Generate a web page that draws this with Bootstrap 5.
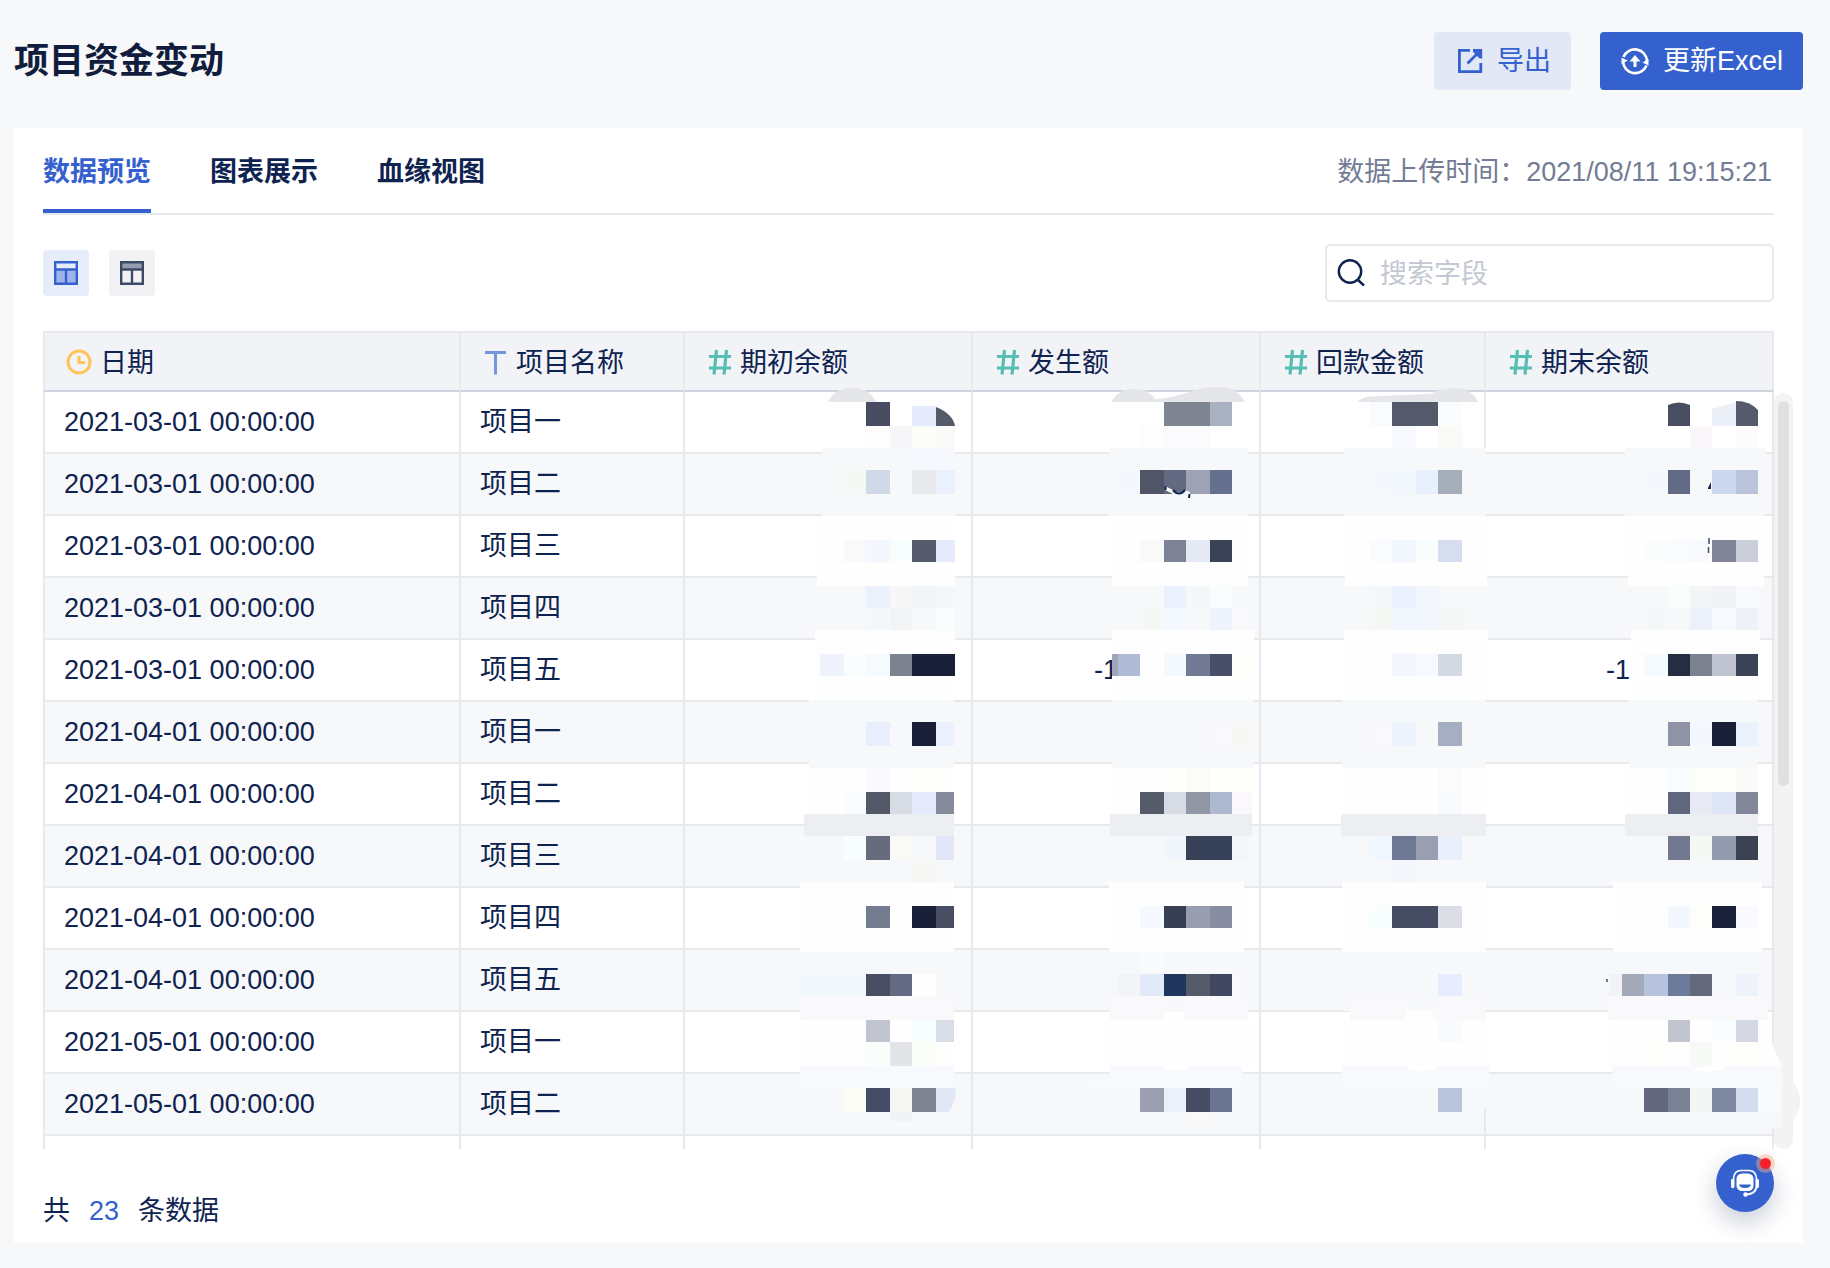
<!DOCTYPE html>
<html lang="zh-CN">
<head>
<meta charset="utf-8">
<meta name="viewport" content="width=device-width, initial-scale=1">
<title>项目资金变动</title>
<link href="https://cdn.jsdelivr.net/npm/bootstrap@5.3.0/dist/css/bootstrap.min.css" rel="stylesheet">
<style>
  :root { --navy: #0f2350; --brand: #3561ce; --line: #e8e9ed; --stripe: #f6f8fa; }
  body { background: var(--stripe); color: var(--navy); font-family: "Liberation Sans", "Noto Sans CJK SC", sans-serif; font-size: 27px; line-height: 38px; }
  .page { padding: 32px 27px 24px 14px; }
  .page-title { font-size: 35px; line-height: 58px; font-weight: 700; color: #121c3d; }
  .head-actions { gap: 29px; }
  .act { height: 58px; padding: 0 19px; gap: 14px; border-radius: 4px; border: 1px solid transparent; font-size: 27px; line-height: 38px; }
  .act-export { background: #e3e8f6; color: var(--brand); }
  .act-update { background: var(--brand); color: #fff; }
  .panel { margin-top: 38px; padding: 0 29px 13px; background: #fff; }
  .tabs-line { border-bottom: 2px solid var(--line); }
  .tabs { gap: 59px; }
  .tabs .nav-link { padding: 25px 0 18px; border-bottom: 4px solid transparent; color: var(--navy); font-weight: 700; }
  .tabs .nav-link.active { color: var(--brand); border-color: var(--brand); }
  .upload-time { padding: 25px 2px 0 0; color: #737c94; }
  .tools { padding: 29px 0; }
  .view-btn { width: 46px; height: 46px; padding: 0; border: 0; border-radius: 4px; background: #f2f2f4; }
  .view-btn.on { background: #e6ecfa; }
  .views { gap: 20px; }
  .search-box { width: 449px; height: 58px; padding: 0 10px; gap: 14px; border: 2px solid var(--line); border-radius: 5px; }
  .search-box input { height: 40px; padding: 2px 0 0; font-size: 27px; line-height: 38px; color: var(--navy); min-width: 0; }
  .search-box input::placeholder { color: #c3c8d3; opacity: 1; }
  .grid-table { width: 100%; table-layout: fixed; border-collapse: separate; border-spacing: 0; }
  .grid-table th { height: 61px; padding: 2px 20px 0; font-weight: 400; background: #f2f3f7; border-top: 2px solid var(--line); border-bottom: 2px solid #cfd4df; border-right: 2px solid var(--line); }
  .grid-table td { height: 62px; padding: 0 19px; border-bottom: 2px solid var(--line); border-right: 2px solid var(--line); }
  .grid-table th:first-child, .grid-table td:first-child { border-left: 2px solid var(--line); }
  .grid-table tbody tr:nth-child(even) td { background: var(--stripe); }
  .grid-table tbody tr.more td { height: 13px; border-bottom: 0; background: #fff; }
  .field { gap: 7px; }
  .c-sm { width: 224px; }
  .c-md { width: 225px; }
  .c-lg { width: 288px; }
  .mask { z-index: 1; overflow: visible; pointer-events: none; }
  .track { top: 62px; bottom: 0; left: 100%; width: 19px; border-radius: 10px; background: #f3f3f4; }
  .thumb { width: 11px; height: 385px; margin: 8px auto 0; border-radius: 6px; background: #dfe0e2; }
  .total { padding-top: 43px; gap: 19px; }
  .total strong { font-weight: 400; color: var(--brand); }
  .help { right: 56px; bottom: 55px; width: 58px; height: 58px; z-index: 3; padding: 0; border: 0; border-radius: 50%; background: var(--brand); box-shadow: 0 10px 24px rgba(30,40,90,.24); }
  .help-dot { top: 4px; right: 3px; width: 11px; height: 11px; border-radius: 50%; background: #f5222d; box-shadow: 0 0 0 4px rgba(250,170,130,.45); }
</style>
<script src="https://cdn.jsdelivr.net/npm/bootstrap@5.3.0/dist/js/bootstrap.bundle.min.js"></script>
</head>
<body>
<div class="page position-relative">
  <header class="d-flex justify-content-between align-items-center">
    <h1 class="page-title m-0">项目资金变动</h1>
    <div class="head-actions d-flex">
      <button type="button" class="act act-export btn d-flex align-items-center">
        <svg width="29" height="29" viewBox="0 0 29 29" fill="none" stroke="currentColor" stroke-width="2.8" aria-hidden="true"><path d="M16 3.400H5.400V24.600H26.800V16M26.200 3.800 13.500 16.500"/><path d="M19 2H28.200V11.500L25.500 11.500L19 4.800Z" fill="currentColor" stroke="none"/></svg>
        <span>导出</span>
      </button>
      <button type="button" class="act act-update btn d-flex align-items-center">
        <svg width="29" height="29" viewBox="0 0 29 29" fill="none" stroke="currentColor" stroke-width="2.600" aria-hidden="true"><path d="M3.500 10A12.200 12.200 0 0 1 27 14.500M26.500 18.500A12.200 12.200 0 0 1 3 14.500"/><path d="M22.500 15.500 28.500 12V18.500ZM7.800 13.500 1.500 17V10.800Z" fill="currentColor" stroke="none"/><path d="M15 20V12" stroke-width="3"/><path d="M15 8 20.500 14.500H9.500Z" fill="currentColor" stroke="none"/></svg>
        <span>更新Excel</span>
      </button>
    </div>
  </header>

  <main class="panel">
    <div class="tabs-line d-flex justify-content-between align-items-start">
      <nav class="tabs nav">
        <a class="nav-link active" href="#preview" aria-current="page">数据预览</a>
        <a class="nav-link" href="#charts">图表展示</a>
        <a class="nav-link" href="#lineage">血缘视图</a>
      </nav>
      <div class="upload-time">数据上传时间：2021/08/11 19:15:21</div>
    </div>

    <div class="tools d-flex justify-content-between align-items-center">
      <div class="views d-flex">
        <button type="button" class="view-btn on d-flex align-items-center justify-content-center" aria-label="表格视图">
          <svg width="26" height="26" viewBox="0 0 26 26" fill="none" stroke="#3561ce" stroke-width="2.400"><path d="M2 9.500H24V24H2Z" fill="#9db3ea" stroke="none"/><path d="M2.200 2.200H23.800V23.800H2.200ZM2 9.500H24M13 9.500V24"/></svg>
        </button>
        <button type="button" class="view-btn d-flex align-items-center justify-content-center" aria-label="字段视图">
          <svg width="26" height="26" viewBox="0 0 26 26" fill="none" stroke="#3d4a67" stroke-width="2.400"><path d="M2 2H24V9.500H2Z" fill="#969dae" stroke="none"/><path d="M2.200 2.200H23.800V23.800H2.200ZM2 9.500H24M13 9.500V24"/></svg>
        </button>
      </div>
      <label class="search-box d-flex align-items-center">
        <svg class="flex-shrink-0" width="29" height="29" viewBox="0 0 29 29" fill="none" stroke="#0f2350" stroke-width="2.400" aria-hidden="true"><circle cx="13" cy="12.500" r="11.200"/><path d="M20.500 20.500 27 26.500"/></svg>
        <input class="border-0 flex-grow-1 bg-transparent" type="text" placeholder="搜索字段" aria-label="搜索字段">
      </label>
    </div>

    <div class="position-relative">
      <table class="grid-table">
        <colgroup><col><col class="c-sm"><col class="c-lg"><col class="c-lg"><col class="c-md"><col class="c-lg"></colgroup>
        <thead>
          <tr>
            <th scope="col"><div class="field d-flex align-items-center"><svg width="28" height="28" viewBox="0 0 28 28" fill="none" stroke="#fdc458" stroke-width="3"><circle cx="14" cy="13" r="11"/><path d="M14 7V13.500H20"/></svg>日期</div></th>
            <th scope="col"><div class="field d-flex align-items-center"><svg width="28" height="28" viewBox="0 0 28 28" fill="none" stroke="#7694e0" stroke-width="3"><path d="M4 3.500H25M14.500 3.500V25.500"/></svg>项目名称</div></th>
            <th scope="col"><div class="field d-flex align-items-center"><svg width="28" height="28" viewBox="0 0 28 28" fill="none" stroke="#55bdb2" stroke-width="3.200"><path d="M4 7.500H26M4 19H26M11.500 1 9 25.500M21.500 1 19 25.500"/></svg>期初余额</div></th>
            <th scope="col"><div class="field d-flex align-items-center"><svg width="28" height="28" viewBox="0 0 28 28" fill="none" stroke="#55bdb2" stroke-width="3.200"><path d="M4 7.500H26M4 19H26M11.500 1 9 25.500M21.500 1 19 25.500"/></svg>发生额</div></th>
            <th scope="col"><div class="field d-flex align-items-center"><svg width="28" height="28" viewBox="0 0 28 28" fill="none" stroke="#55bdb2" stroke-width="3.200"><path d="M4 7.500H26M4 19H26M11.500 1 9 25.500M21.500 1 19 25.500"/></svg>回款金额</div></th>
            <th scope="col"><div class="field d-flex align-items-center"><svg width="28" height="28" viewBox="0 0 28 28" fill="none" stroke="#55bdb2" stroke-width="3.200"><path d="M4 7.500H26M4 19H26M11.500 1 9 25.500M21.500 1 19 25.500"/></svg>期末余额</div></th>
          </tr>
        </thead>
        <tbody id="rows"></tbody>
      </table>
      <div class="track position-absolute"><div class="thumb"></div></div>
    </div>

    <div class="total d-flex"><span>共</span><strong>23</strong><span>条数据</span></div>
  </main>

  <button type="button" class="help position-absolute d-flex align-items-center justify-content-center" aria-label="在线客服">
    <svg width="30" height="30" viewBox="0 0 30 30" fill="none" stroke="#fff" stroke-width="1.600"><path d="M3.500 13V11Q4 2.500 11 2.500H19Q26 2.500 26.500 11V13"/><path d="M26.500 19Q25 26 17 26.500" stroke-width="2"/><path d="M2.800 12.500V18.500M27.200 12.500V18.500" stroke-width="3.500" stroke-linecap="round"/><circle cx="15.500" cy="26.500" r="2.200" fill="#fff" stroke="none"/><rect x="6.500" y="5.500" width="17" height="17.500" rx="5.500" fill="#fff" stroke="none"/><path d="M9 16.500H21Q20 20 15 20T9 16.500Z" fill="#3561ce" stroke="none"/></svg>
    <span class="help-dot position-absolute"></span>
  </button>
</div>

<script>
  // Masked amounts: each column lists bands [top, bottom, [left, right, colour], ...]
  const W = '#fefefe', S = '#f6f8fa', G = '#edeef1', L = '#f9f9fc', B = '#f7f9fd';
  const masks = [
    { box: '685 392 286 757', width: 286,
      under: '<path d="M828 402C836 383 868 383 876 402Z" fill="#e5e6e9"/>',
      bands: [
        [402,426,[866,890,'#484d62']],[406,426,[912,936,'#e5ebfa']],
        [426,448,[866,890,'#fdfefb'],[890,912,'#f6f6f8'],[912,936,'#fcfdf8'],[936,955,'#fafbf9']],
        [448,516,[822,955,S]],[448,470,[866,890,'#f5f9f9'],[912,955,'#f7f8fd']],
        [470,494,[844,866,'#f6f8f6'],[866,890,'#d0d9e8'],[912,936,'#e8e9ec'],[936,955,'#eaf1fd']],
        [516,586,[817,955,W]],
        [540,562,[844,866,'#f9f9f9'],[866,890,'#f4f8fe'],[890,912,'#f8fdfe'],[912,936,'#555b6b'],[936,955,'#e5ebfb']],
        [586,630,[816,955,S]],[586,608,[866,890,'#ebf1fc'],[890,912,'#f7f7f8'],[912,936,'#f1f5f8'],[936,955,'#f4f8fd']],
        [608,630,[866,890,'#f2f8fb'],[890,912,'#f3f4f6'],[936,955,'#f8fdfe']],
        [630,700,[815,955,W]],
        [654,676,[820,844,'#eef3fe'],[844,866,'#f9fdfe'],[866,890,'#f5faff'],[890,912,'#7c8290'],[912,955,'#1b2039']],
        [700,768,[809,954,S]],[700,722,[812,954,'#f5f9f9']],
        [722,746,[866,890,'#e8eefc'],[912,936,'#1b2039'],[936,954,'#eaf0fd']],
        [768,814,[808,954,W]],[768,792,[866,890,'#fbf9fe'],[912,936,'#fdfefa']],
        [792,814,[844,866,'#f9fdfe'],[866,890,'#535867'],[890,912,'#d8dce4'],[912,936,'#e5ebfb'],[936,954,'#868b9c']],
        [814,836,[804,954,G]],[836,882,[804,954,S]],
        [836,860,[844,866,'#f8fdfe'],[866,890,'#666b7e'],[890,912,'#f9f9f6'],[936,954,'#e1e7f6']],[860,882,[912,936,'#f7f8f5']],
        [882,952,[800,954,W]],[906,928,[866,890,'#747c90'],[912,936,'#1b2039'],[936,954,'#4a4e62']],
        [952,996,[800,954,S]],
        [974,996,[800,844,'#f3f8fc'],[844,866,'#f2f9fd'],[866,890,'#494e63'],[890,912,'#636a81'],[912,936,'#fefefe']],
        [996,1020,[800,954,L]],[1020,1066,[802,955,W]],
        [1020,1042,[866,890,'#c1c5d0'],[912,936,'#f8fdfe'],[936,954,'#d8dde6']],
        [1042,1066,[866,890,'#fafefb'],[890,912,'#e3e4e7'],[912,936,'#fbfdf9']],
        [1066,1088,[800,955,B]],[1088,1112,[844,866,'#fdfdf8'],[866,890,'#454c67'],[890,912,'#f6f7f5'],[912,936,'#7f8491']],
        [1112,1121,[890,912,'#f2f3f6']]
      ],
      over: '<path d="M936 407Q953 414 955 426H936Z" fill="#555b69"/><path d="M936 1088H956Q956 1104 948 1112H936Z" fill="#e1e7f7"/>' },
    { box: '973 392 286 757', width: 286,
      under: '<path d="M1111 402C1120 385 1145 385 1155 399C1185 397 1195 387 1215 387C1234 387 1240 393 1245 402Z" fill="#e5e6e9"/><text x="1094" y="679" font-size="27" fill="#0f2350">-1</text>',
      bands: [
        [402,426,[1164,1210,'#7f8491'],[1210,1232,'#aab2c1']],[426,448,[1140,1164,'#fefdfb'],[1164,1210,'#fbfbfd']],
        [448,516,[1109,1248,S]],[470,494,[1118,1140,'#f4f7fd'],[1140,1164,'#505567'],[1164,1186,'#636980'],[1186,1210,'#9da2b4'],[1210,1232,'#65708f']],
        [516,586,[1112,1248,W]],[540,562,[1140,1164,'#f8f9f8'],[1164,1186,'#7d8394'],[1186,1210,'#e5e9f4'],[1210,1232,'#3a4256']],
        [586,630,[1112,1248,S]],[586,608,[1164,1186,'#eaf1fc'],[1186,1210,'#f6f7f9'],[1210,1232,'#f9fdfe']],
        [608,630,[1140,1164,'#f6f8f5'],[1164,1186,'#f3f9ff'],[1210,1232,'#eff3fc'],[1232,1248,'#f9f8fa']],
        [630,700,[1112,1254,W]],[654,676,[1112,1118,'#9fa6b4'],[1118,1140,'#b0bbd7'],[1164,1186,'#f4f9fe'],[1186,1210,'#717b96'],[1210,1232,'#484f67'],[1232,1254,'#fefefb']],
        [700,768,[1112,1254,S]],[700,722,[1112,1254,'#f5f9f9']],[722,746,[1210,1232,'#f9f9fb'],[1232,1254,'#f7f8f5']],
        [768,814,[1112,1254,W]],[768,792,[1164,1186,'#fefefb'],[1186,1210,'#fafcf8'],[1210,1254,'#fefefa']],
        [792,814,[1140,1164,'#565b69'],[1164,1186,'#d7dbe4'],[1186,1210,'#9197a7'],[1210,1232,'#aeb8ce'],[1232,1252,'#faf7fd']],
        [814,836,[1110,1252,G]],[836,882,[1110,1250,S]],[836,860,[1164,1186,'#f1f6fd'],[1186,1232,'#374157'],[1232,1248,'#f3f7fa']],
        [882,952,[1109,1244,W]],[906,928,[1140,1164,'#f5f8fe'],[1164,1186,'#373f52'],[1186,1210,'#999db0'],[1210,1232,'#888da1']],
        [952,996,[1109,1242,S]],[952,974,[1140,1164,'#f9fafb']],[974,996,[1118,1140,'#f3f4f6'],[1140,1164,'#e2e9f8'],[1164,1186,'#20365f'],[1186,1210,'#555b69'],[1210,1232,'#40485f'],[1232,1244,'#f9f8fc']],
        [996,1020,[1109,1248,L]],[1020,1066,[1107,1253,W]],[1066,1088,[1109,1243,B]],[1066,1070,[1163,1189,W]],
        [1088,1112,[1140,1164,'#9b9fb1'],[1164,1186,'#ecf0f9'],[1186,1210,'#474d65'],[1210,1232,'#6b7491']],[1112,1127,[1186,1210,'#f9f9fa']]
      ],
      over: '<path d="M1165 486L1175 491Q1179 494 1185 490L1190 492V498H1185L1180 494H1173L1165 490Z" fill="#f6f8fa"/><path d="M1165.500 486V490M1173 490Q1179 497 1185 490M1189.500 494L1189 498" fill="none" stroke="#0f2350" stroke-width="2"/><path d="M1163 1012L1184 996V1012Z" fill="#f6f8fa"/><path d="M1163 1012H1184V1020H1163Z" fill="#fefefe"/><path d="M1077 1088L1096 1075H1109V1088Z" fill="#f7f9fc"/>' },
    { box: '1261 392 223 757', width: 223,
      under: '<path d="M1357 402C1366 394 1375 397 1380 396L1430 394C1450 384 1472 386 1478 402Z" fill="#e5e6e9"/>',
      bands: [
        [402,426,[1370,1392,'#fafbfe'],[1392,1438,'#545a69'],[1438,1462,'#f9fdfe']],[426,448,[1392,1416,'#f8f9fe'],[1438,1462,'#f9faf6']],
        [448,516,[1344,1486,S]],[448,494,[1344,1370,'#f7f8fb']],[470,494,[1370,1392,'#f4f8fd'],[1392,1416,'#f2f7fe'],[1416,1438,'#e9f0fd'],[1438,1462,'#a6adbb']],
        [516,586,[1345,1487,W]],[540,562,[1370,1392,'#fafbfe'],[1392,1416,'#f3f8fe'],[1416,1438,'#f9fdfe'],[1438,1462,'#d5ddee']],
        [586,630,[1344,1487,S]],[586,608,[1370,1392,'#f4f8fb'],[1392,1416,'#eaf0fc'],[1416,1438,'#f1f7fd']],[608,630,[1370,1392,'#f6f8f5'],[1392,1416,'#f2f7fd'],[1416,1438,'#f2f7fd'],[1438,1462,'#f5f6f6']],
        [630,700,[1344,1488,W]],[654,676,[1392,1416,'#f4f8fe'],[1416,1438,'#f6f9fe'],[1438,1462,'#d4dae4']],
        [700,768,[1342,1486,S]],[700,722,[1343,1486,'#f5f9f9']],[722,746,[1370,1392,'#f9f9fc'],[1392,1416,'#ecf3fd'],[1438,1462,'#a6afc1']],
        [768,814,[1342,1486,W]],[768,792,[1438,1462,'#fbfbfc']],[792,814,[1438,1462,'#f9fafe']],
        [814,836,[1341,1486,G]],[836,882,[1341,1486,S]],[836,860,[1370,1392,'#f1f7fe'],[1392,1416,'#6e7893'],[1416,1438,'#999eb0'],[1438,1462,'#e9effb']],
        [860,882,[1392,1416,'#f6f7fc']],[882,952,[1342,1486,W]],[906,928,[1370,1392,'#f8fdfe'],[1392,1438,'#464c61'],[1438,1462,'#dbdee5']],
        [952,1011,[1344,1486,S]],[974,996,[1438,1462,'#e7edfc']],[996,1020,[1350,1486,L]],
        [1020,1066,[1343,1486,W]],[1020,1042,[1438,1462,'#f8fafe']],[1066,1088,[1341,1489,B]],[1088,1108,[1480,1487,S]],
        [1088,1112,[1438,1462,'#b9c3da']]
      ],
      over: '<path d="M1407 1011L1410 996H1433V1011Z" fill="#f6f8fa"/><path d="M1405 1020L1407 1010H1433V1020Z" fill="#fefefe"/><path d="M1409 1066H1435V1069L1423 1071H1409Z" fill="#fff"/>' },
    { box: '1486 392 286 757', width: 286,
      under: '<text x="1606" y="679" font-size="27" fill="#0f2350">-1</text><path d="M1772 1040C1776 1060 1782 1060 1782 1068H1765V1040Z" fill="#fefefe"/><path d="M1793 1081Q1807 1102 1793 1121Z" fill="#f3f3f4"/><path d="M1757 1066H1782V1122Q1782 1128 1776 1128H1757Z" fill="#f6f8fb"/>',
      bands: [
        [426,448,[1690,1712,'#faf6f9'],[1736,1758,'#fcfcfd']],
        [448,516,[1625,1765,S]],[470,494,[1644,1668,'#f4f8fc'],[1668,1690,'#636b84'],[1690,1708,'#f6f9f9'],[1712,1736,'#ccd8ee'],[1736,1758,'#b9c4da']],
        [516,586,[1628,1764,W]],[540,562,[1644,1668,'#fafdfc'],[1668,1690,'#f8fcfe'],[1690,1708,'#f8f9fd'],[1712,1736,'#818597'],[1736,1758,'#cbcfd9']],
        [586,630,[1629,1760,S]],[586,608,[1668,1690,'#f9fdfc'],[1690,1712,'#f4f5f6'],[1712,1736,'#f2f3f6'],[1736,1758,'#f9faff']],[608,630,[1644,1668,'#f4f8f8'],[1690,1712,'#ecf0f8'],[1712,1736,'#f6f9fe'],[1736,1758,'#eef2f8']],
        [630,700,[1631,1760,W]],[654,676,[1644,1668,'#f4fafe'],[1668,1690,'#252d43'],[1690,1712,'#7c818f'],[1712,1736,'#bfc4d0'],[1736,1758,'#3a4357']],
        [700,768,[1629,1758,S]],[700,722,[1631,1758,'#f5f9f9']],[722,746,[1668,1690,'#8e94a6'],[1690,1712,'#f4f8fe'],[1712,1736,'#1b2039'],[1736,1758,'#eaf2fe']],
        [768,814,[1628,1758,W]],[768,792,[1668,1690,'#f8fcff'],[1690,1736,'#fdfefa'],[1736,1758,'#fbfafb']],[792,814,[1668,1690,'#60667b'],[1690,1712,'#e8ebf4'],[1712,1736,'#dfe6f5'],[1736,1758,'#82889a']],
        [814,836,[1625,1758,G]],[836,882,[1620,1758,S]],[836,860,[1668,1690,'#717990'],[1690,1712,'#f5f8f5'],[1712,1736,'#959bae'],[1736,1758,'#3a4254']],
        [882,952,[1613,1762,W]],[906,928,[1668,1690,'#f3f8ff'],[1690,1712,'#fdfefa'],[1712,1736,'#1b2139'],[1736,1758,'#f9faff']],
        [952,996,[1608,1764,S]],[974,996,[1609,1622,'#f2f3f6'],[1622,1644,'#a3a9b8'],[1644,1668,'#b7c3dc'],[1668,1690,'#6b7b99'],[1690,1712,'#65697c'],[1736,1758,'#eef3fb']],
        [996,1020,[1608,1768,L]],[1020,1066,[1610,1764,W]],[1020,1042,[1668,1690,'#c0c5d0'],[1712,1736,'#f9fdfe'],[1736,1758,'#d3d8e2']],
        [1042,1066,[1644,1668,'#fefefa'],[1690,1712,'#f7f9f6'],[1736,1758,'#fdfef9']],
        [1066,1088,[1612,1782,B]],[1088,1112,[1644,1668,'#62677b'],[1668,1690,'#778295'],[1690,1712,'#f4f6f6'],[1712,1736,'#7e88a1'],[1736,1758,'#d4ddee'],[1758,1782,'#f8fafd']]
      ],
      over: '<path d="M1668 426V405Q1679 400 1690 405V426Z" fill="#4a4e63"/><path d="M1712 426V409L1736 402V426Z" fill="#ebf0f8"/><path d="M1736 426V401Q1750 401 1758 410V426Z" fill="#555b6a"/><path d="M1708 488L1711 482V489H1708Z" fill="#0f2350"/><path d="M1709 538V544M1708.500 547V553M1607 979V982" stroke="#3d4d72" stroke-width="1.500"/><path d="M1690 1071L1717 1063L1724 1063V1071Z" fill="#fff"/>' }
  ];
  const maskSvg = m => `<svg class="mask position-absolute top-0 end-0" width="${m.width}" height="757" viewBox="${m.box}" aria-hidden="true">${m.under}` +
    m.bands.map(([t, b, ...cells]) => cells.map(([l, r, c]) => `<rect x="${l}" y="${t}" width="${r - l}" height="${b - t}" fill="${c}"/>`).join('')).join('') + m.over + '</svg>';

  const names = ['项目一', '项目二', '项目三', '项目四', '项目五'];
  let html = '';
  for (let i = 0; i < 12; i++) {
    const month = 3 + Math.floor(i / 5);
    html += `<tr><td>2021-0${month}-01 00:00:00</td><td>${names[i % 5]}</td>` +
      masks.map(m => i ? '<td></td>' : `<td class="position-relative">${maskSvg(m)}</td>`).join('') + '</tr>';
  }
  html += '<tr class="more">' + '<td></td>'.repeat(6) + '</tr>';
  document.getElementById('rows').innerHTML = html;
</script>
</body>
</html>
